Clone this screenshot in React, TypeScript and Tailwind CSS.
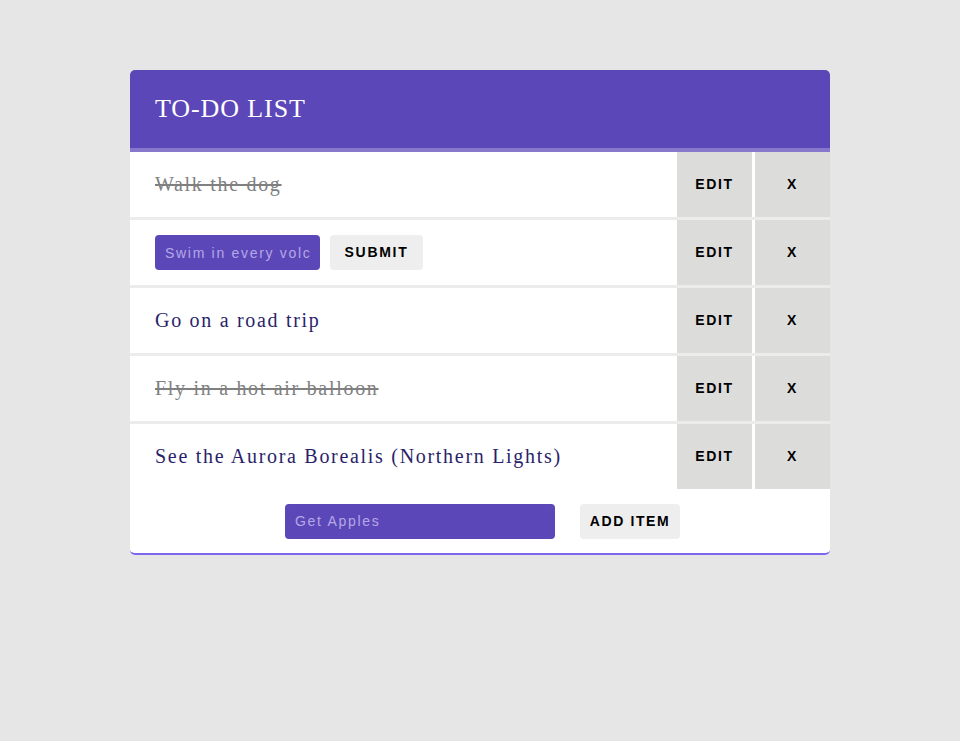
import React from "react";

const serif = "font-['Liberation_Serif','Times_New_Roman',serif]";
const sans = "font-['Liberation_Sans',Arial,sans-serif]";

type Item = { text: string; done: boolean; editing?: boolean };

const items: Item[] = [
  { text: "Walk the dog", done: true },
  { text: "Swim in every volcano", done: false, editing: true },
  { text: "Go on a road trip", done: false },
  { text: "Fly in a hot air balloon", done: true },
  { text: "See the Aurora Borealis (Northern Lights)", done: false },
];

function Row({ item, last }: { item: Item; last: boolean }) {
  return (
    <div className={`flex h-[65px] bg-white ${last ? "" : "border-b-[3px] border-[#ececec] box-content"}`}>
      <div className="flex-1 flex items-center pl-[25px] min-w-0">
        {item.editing ? (
          <div className="flex items-center gap-[10px]">
            <input
              defaultValue={item.text}
              readOnly
              className={`${sans} w-[165px] h-[35px] rounded-[4px] bg-[#5c47b8] px-[10px] text-[14px] tracking-[1.7px] text-[#b4a9e6] outline-none`}
            />
            <button
              className={`${sans} w-[93px] h-[35px] rounded-[4px] bg-[#eeeeee] text-[14px] font-bold tracking-[1.7px] text-black`}
            >
              SUBMIT
            </button>
          </div>
        ) : (
          <span
            className={`${serif} text-[20px] tracking-[1.7px] pb-[2px] ${
              item.done ? "line-through text-[#808080]" : "text-[#2a1f6b]"
            }`}
          >
            {item.text}
          </span>
        )}
      </div>
      <button
        className={`${sans} w-[75px] h-full bg-[#dcdcdb] text-[14px] font-bold tracking-[1.7px] text-black`}
      >
        EDIT
      </button>
      <div className="w-[3px] bg-white" />
      <button
        className={`${sans} w-[75px] h-full bg-[#dcdcdb] text-[14px] font-bold tracking-[1.7px] text-black`}
      >
        X
      </button>
    </div>
  );
}

export default function App() {
  return (
    <div className="min-h-[741px] w-full bg-[#e6e6e6] pt-[70px]">
      <div className="mx-auto w-[700px] rounded-[5px] overflow-hidden bg-white border-b-2 border-[#7b68ee]">
        <div className="h-[82px] bg-[#5c47b8] border-b-4 border-[#8878cc] flex items-center pl-[25px]">
          <h1 className={`${serif} text-[26px] tracking-[0.9px] text-white leading-none`}>TO-DO LIST</h1>
        </div>
        {items.map((it, i) => (
          <Row key={i} item={it} last={i === items.length - 1} />
        ))}
        <div className="h-[64px] flex items-center justify-center gap-[25px] pl-[5px]">
          <input
            placeholder="Get Apples"
            className={`${sans} w-[270px] h-[35px] rounded-[4px] bg-[#5c47b8] px-[10px] text-[14px] tracking-[1.7px] text-white placeholder:text-[#b4a9e6] outline-none`}
          />
          <button
            className={`${sans} w-[100px] h-[35px] rounded-[4px] bg-[#eeeeee] text-[14px] font-bold tracking-[1.6px] text-black`}
          >
            ADD ITEM
          </button>
        </div>
      </div>
    </div>
  );
}
